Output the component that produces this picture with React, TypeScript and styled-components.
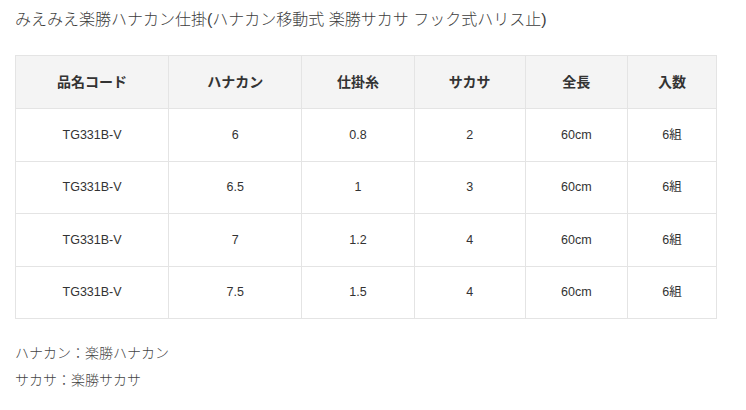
import React from "react";
import styled, { createGlobalStyle } from "styled-components";

const Global = createGlobalStyle`
  html, body { margin: 0; padding: 0; background: #fff; }
  body {
    font-family: "Liberation Sans", Arial, "Noto Sans CJK JP", sans-serif;
    color: #333;
  }
`;

const Page = styled.div`
  padding: 8px 0 0 15px;
  width: 702px;
`;

const Title = styled.h1`
  margin: 0;
  font-size: 16px;
  line-height: 24px;
  font-weight: 300;
  color: #3c3c3c;
  white-space: nowrap;
  font-family: "Liberation Sans", "Noto Sans CJK JP", sans-serif;
`;

const Table = styled.table`
  margin-top: 23px;
  width: 702px;
  table-layout: fixed;
  border-collapse: collapse;
`;

const Col = styled.col<{ $w: number }>`
  width: ${(p) => p.$w}px;
`;

const HeadCell = styled.th`
  height: 52px;
  padding: 0;
  background: #f4f4f4;
  border: 1px solid #e4e4e4;
  font-size: 14px;
  line-height: 18px;
  font-weight: 700;
  color: #333;
  text-align: center;
  font-family: "Liberation Sans", "Noto Sans CJK JP", sans-serif;
`;

const Cell = styled.td`
  height: 51.5px;
  padding: 0;
  border: 1px solid #e4e4e4;
  font-size: 12.5px;
  line-height: 16px;
  font-weight: 400;
  color: #333;
  text-align: center;
`;

const Notes = styled.div`
  margin-top: 21px;
  font-size: 14px;
  line-height: 27px;
  font-weight: 300;
  color: #444;
  font-family: "Liberation Sans", "Noto Sans CJK JP", sans-serif;
`;

const NoteLine = styled.div`
  white-space: nowrap;
`;

const columns: [string, number][] = [
  ["品名コード", 153],
  ["ハナカン", 133],
  ["仕掛糸", 112],
  ["サカサ", 111],
  ["全長", 102],
  ["入数", 89],
];

const rows = [
  ["TG331B-V", "6", "0.8", "2", "60cm", "6組"],
  ["TG331B-V", "6.5", "1", "3", "60cm", "6組"],
  ["TG331B-V", "7", "1.2", "4", "60cm", "6組"],
  ["TG331B-V", "7.5", "1.5", "4", "60cm", "6組"],
];

export default function App() {
  return (
    <>
      <Global />
      <Page>
        <Title>みえみえ楽勝ハナカン仕掛(ハナカン移動式 楽勝サカサ フック式ハリス止)</Title>
        <Table>
          <colgroup>
            {columns.map(([label, w]) => (
              <Col key={label} $w={w} />
            ))}
          </colgroup>
          <thead>
            <tr>
              {columns.map(([label]) => (
                <HeadCell key={label}>{label}</HeadCell>
              ))}
            </tr>
          </thead>
          <tbody>
            {rows.map((r, i) => (
              <tr key={i}>
                {r.map((v, j) => (
                  <Cell key={j}>{v}</Cell>
                ))}
              </tr>
            ))}
          </tbody>
        </Table>
        <Notes>
          <NoteLine>ハナカン：楽勝ハナカン</NoteLine>
          <NoteLine>サカサ：楽勝サカサ</NoteLine>
        </Notes>
      </Page>
    </>
  );
}
